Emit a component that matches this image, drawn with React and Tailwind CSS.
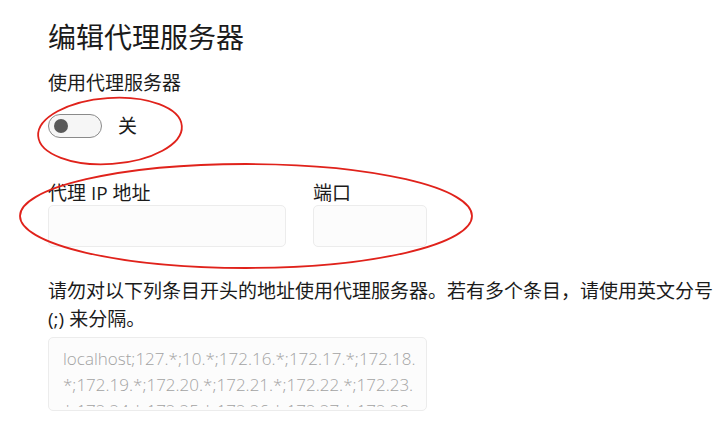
import React from "react";

const LINES = [
  "localhost;127.*;10.*;172.16.*;172.17.*;172.18.",
  "*;172.19.*;172.20.*;172.21.*;172.22.*;172.23.",
  "*;172.24.*;172.25.*;172.26.*;172.27.*;172.28.",
];

function Toggle() {
  return (
    <div className="flex items-center gap-[16px]">
      <div className="w-[54px] h-[24px] rounded-full border border-[#8a8a8a] bg-[#f6f6f6] flex items-center pl-[5px]">
        <div className="w-[14px] h-[14px] rounded-full bg-[#5a5a5a]" />
      </div>
      <span className="text-[19px] leading-[19px] text-[#1b1b1b]">关</span>
    </div>
  );
}

export default function App() {
  return (
    <div className="relative w-[723px] h-[430px] overflow-hidden bg-white pl-[48px] font-['Open_Sans','Noto_Sans_CJK_SC',sans-serif] text-[#1b1b1b]">
      {/* Title */}
      <h1 className="mt-[23px] text-[28px] leading-[28px] font-normal">编辑代理服务器</h1>

      {/* Toggle */}
      <div className="mt-[23px] text-[19px] leading-[19px]">使用代理服务器</div>
      <div className="mt-[21px]">
        <Toggle />
      </div>

      {/* Address + port */}
      <div className="mt-[46px] flex gap-[27px]">
        <div className="flex flex-col gap-[2px]">
          <span className="text-[19px] leading-[19px]">代理 IP 地址</span>
          <div className="w-[238px] h-[42px] rounded-[5px] border border-[#ececec] bg-[#fcfcfc]" />
        </div>
        <div className="flex flex-col gap-[2px]">
          <span className="text-[19px] leading-[19px]">端口</span>
          <div className="w-[114px] h-[42px] rounded-[5px] border border-[#ececec] bg-[#fcfcfc]" />
        </div>
      </div>

      {/* Exceptions */}
      <p className="mt-[30px] text-[19px] leading-[28px] whitespace-nowrap">
        请勿对以下列条目开头的地址使用代理服务器。若有多个条目，请使用英文分号
        <br />
        (;) 来分隔。
      </p>
      <div className="mt-[4px] w-[379px] h-[74px] rounded-[5px] border border-[#ececec] bg-[#fcfcfc] pl-[14px] pt-[8px]">
        <div className="h-[61px] overflow-hidden text-[17px] leading-[26px] text-[#a3a3a3] font-light">
          {LINES.map((l) => (
            <div key={l} className="whitespace-nowrap">
              {l}
            </div>
          ))}
        </div>
      </div>

      {/* annotation rings */}
      <svg className="absolute inset-0 pointer-events-none" width="723" height="430">
        <ellipse cx="110" cy="131" rx="72" ry="33" transform="rotate(-4 110 131)" fill="none" stroke="#e0221b" strokeWidth="1.8" />
        <ellipse cx="246" cy="216" rx="226" ry="52" fill="none" stroke="#e0221b" strokeWidth="1.8" />
      </svg>
    </div>
  );
}
